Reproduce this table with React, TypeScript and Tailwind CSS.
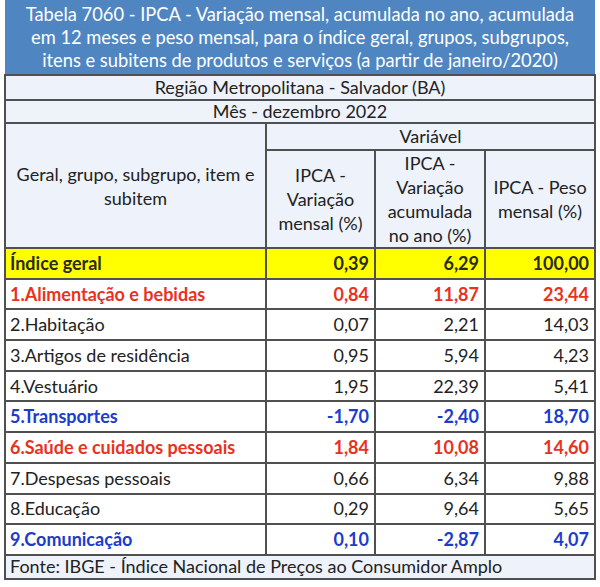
const font = { fontFamily: "Lato, 'Open Sans', sans-serif" };

type Row = { label: string; v: [string, string, string]; tone: "yellow" | "red" | "blue" | "plain" };

const rows: Row[] = [
  { label: "Índice geral", v: ["0,39", "6,29", "100,00"], tone: "yellow" },
  { label: "1.Alimentação e bebidas", v: ["0,84", "11,87", "23,44"], tone: "red" },
  { label: "2.Habitação", v: ["0,07", "2,21", "14,03"], tone: "plain" },
  { label: "3.Artigos de residência", v: ["0,95", "5,94", "4,23"], tone: "plain" },
  { label: "4.Vestuário", v: ["1,95", "22,39", "5,41"], tone: "plain" },
  { label: "5.Transportes", v: ["-1,70", "-2,40", "18,70"], tone: "blue" },
  { label: "6.Saúde e cuidados pessoais", v: ["1,84", "10,08", "14,60"], tone: "red" },
  { label: "7.Despesas pessoais", v: ["0,66", "6,34", "9,88"], tone: "plain" },
  { label: "8.Educação", v: ["0,29", "9,64", "5,65"], tone: "plain" },
  { label: "9.Comunicação", v: ["0,10", "-2,87", "4,07"], tone: "blue" },
];

const toneClass: Record<Row["tone"], string> = {
  yellow: "bg-[#ffff00] text-[#2a2a1a] font-bold",
  red: "bg-white text-[#e8321e] font-bold",
  blue: "bg-white text-[#1c3ccc] font-bold",
  plain: "bg-white text-[#222]",
};

const cell = "border-2 border-[#505050]";

export default function App() {
  return (
    <div className="w-[600px] h-[587px] bg-white pl-[4px] pr-[6px]" style={font}>
      <table className="w-[590px] border-collapse table-fixed text-[18px] leading-[21px]">
        <colgroup>
          <col className="w-[261px]" />
          <col className="w-[109px]" />
          <col className="w-[110px]" />
          <col className="w-[110px]" />
        </colgroup>
        <thead>
          <tr>
            <th
              colSpan={4}
              className="h-[75px] bg-[#4f86c2] text-white font-normal text-[18.3px] leading-[23px] text-center px-1 border-b-2 border-[#505050]"
            >
              Tabela 7060 - IPCA - Variação mensal, acumulada no ano, acumulada
              <br />
              em 12 meses e peso mensal, para o índice geral, grupos, subgrupos,
              <br />
              itens e subitens de produtos e serviços (a partir de janeiro/2020)
            </th>
          </tr>
          <tr>
            <th colSpan={4} className={`${cell} h-[25px] bg-[#eef2fa] font-normal text-[#222] text-center`}>
              Região Metropolitana - Salvador (BA)
            </th>
          </tr>
          <tr>
            <th colSpan={4} className={`${cell} h-[23px] bg-[#eef2fa] font-normal text-[#222] text-center`}>
              Mês - dezembro 2022
            </th>
          </tr>
          <tr>
            <th rowSpan={2} className={`${cell} bg-[#eef2fa] font-normal text-[#222] text-center px-1 leading-[24px]`}>
              Geral, grupo, subgrupo, item e
              <br />
              subitem
            </th>
            <th colSpan={3} className={`${cell} h-[27px] bg-[#eef2fa] font-normal text-[#222] text-center`}>
              Variável
            </th>
          </tr>
          <tr>
            <th className={`${cell} h-[97px] bg-[#eef2fa] font-normal text-[#222] text-center leading-[24px]`}>
              IPCA -<br />
              Variação
              <br />
              mensal (%)
            </th>
            <th className={`${cell} bg-[#eef2fa] font-normal text-[#222] text-center leading-[24px]`}>
              IPCA -<br />
              Variação
              <br />
              acumulada
              <br />
              no ano (%)
            </th>
            <th className={`${cell} bg-[#eef2fa] font-normal text-[#222] text-center leading-[24px]`}>
              IPCA - Peso
              <br />
              mensal (%)
            </th>
          </tr>
        </thead>
        <tbody>
          {rows.map((r) => (
            <tr key={r.label} className={toneClass[r.tone]}>
              <td className={`${cell} h-[30.7px] px-[4px] py-0 text-left whitespace-nowrap`}>{r.label}</td>
              {r.v.map((x, i) => (
                <td key={i} className={`${cell} px-[5px] py-0 text-right`}>
                  {x}
                </td>
              ))}
            </tr>
          ))}
          <tr>
            <td colSpan={4} className={`${cell} h-[24px] py-0 bg-[#eef2fa] text-[#222] px-[4px] text-left`}>
              Fonte: IBGE - Índice Nacional de Preços ao Consumidor Amplo
            </td>
          </tr>
        </tbody>
      </table>
    </div>
  );
}
